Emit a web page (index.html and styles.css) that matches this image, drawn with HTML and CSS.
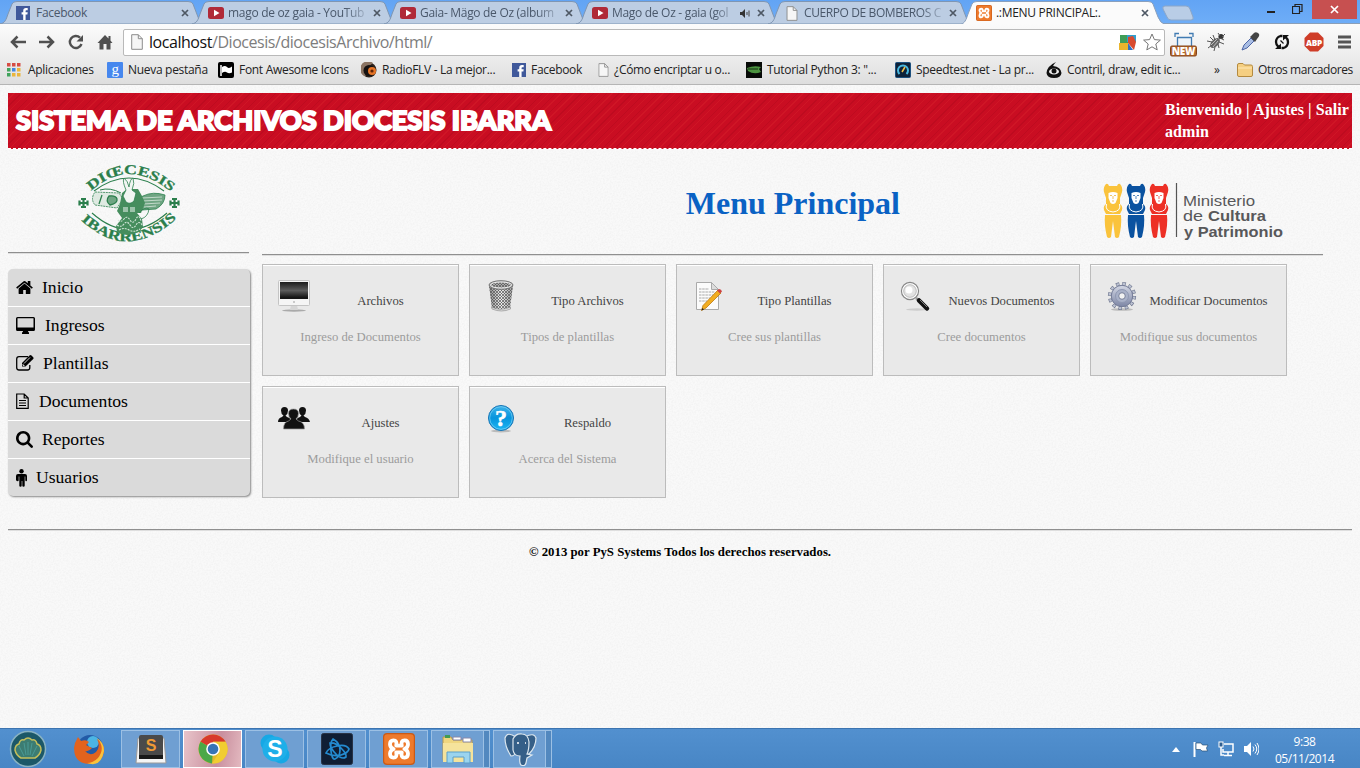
FILE: index.html
```html
<!DOCTYPE html>
<html lang="es">
<head>
<meta charset="utf-8">
<title>.:MENU PRINCIPAL:.</title>
<link rel="stylesheet" href="styles.css">
</head>
<body>
<svg class="defs" width="0" height="0">
  <defs>
    <linearGradient id="g-glass" x1="0" y1="0" x2="0" y2="1"><stop offset="0" stop-color="#1c1c1c"/><stop offset=".5" stop-color="#5c5c5c"/><stop offset=".9" stop-color="#161616"/></linearGradient>
    <linearGradient id="g-metal" x1="0" y1="0" x2="1" y2="0"><stop offset="0" stop-color="#888"/><stop offset=".5" stop-color="#eee"/><stop offset="1" stop-color="#999"/></linearGradient>
    <linearGradient id="g-blue" x1="0" y1="0" x2="0" y2="1"><stop offset="0" stop-color="#3fb4ea"/><stop offset=".5" stop-color="#0795dd"/><stop offset="1" stop-color="#1cb6f4"/></linearGradient>
    <linearGradient id="g-gear" x1="0" y1="0" x2="0" y2="1"><stop offset="0" stop-color="#d3d7e4"/><stop offset="1" stop-color="#7d86a5"/></linearGradient>
    <pattern id="mesh" width="3" height="3" patternUnits="userSpaceOnUse"><path d="M0 0l3 3M3 0L0 3" stroke="#555" stroke-width=".7"/></pattern>
    <symbol id="fb" viewBox="0 0 14 14"><path fill="#40599b" d="M0 0h14v14H0z"/><path fill="#fff" d="M7.200 14V8.500H5.600V6.300h1.600V5c0-2 1-2.900 2.700-2.900h1.800v2.200h-1.100c-.8 0-1 .3-1 1v1h2.100l-.3 2.200H9.600V14z"/></symbol>
    <symbol id="yt" viewBox="0 0 16 12"><rect width="16" height="12" rx="2.500" fill="#b02a38"/><path fill="#fff" d="M6 2.800v6.400l5.500-3.200z"/></symbol>
    <symbol id="page" viewBox="0 0 12 16"><path d="M.7.7h6.600l4 4v10.600H.7z" fill="#f6f6f6" stroke="#8d8d8d"/><path d="M7.300.7v4h4" fill="none" stroke="#8d8d8d"/></symbol>
    <symbol id="xampp" viewBox="0 0 16 16"><rect width="16" height="16" rx="2" fill="#c95a17"/><rect x=".6" y=".6" width="14.800" height="14.800" rx="1.600" fill="#ee7a2c"/><path d="M6.600 6.300Q7.200 3.700 5.200 3.700 3.500 3.700 3.500 5.600 3.500 7.300 5.300 8 3.500 8.700 3.500 10.400 3.500 12.300 5.200 12.300 7.200 12.300 6.600 9.700H9.400Q8.800 12.300 10.800 12.300 12.500 12.300 12.500 10.400 12.500 8.700 10.700 8 12.500 7.300 12.500 5.600 12.500 3.700 10.800 3.700 8.800 3.700 9.400 6.300z" fill="none" stroke="#fff" stroke-width="1.900" stroke-linejoin="round"/></symbol>
    <symbol id="close" viewBox="0 0 8 8"><path d="M1 1l6 6M7 1L1 7" stroke="#4e5864" stroke-width="1.700"/></symbol>
    <symbol id="tab" viewBox="0 0 210 24"><path d="M0 24C5 23 6 20 8 14L12 4Q13 1.500 17 1.500H188q4 0 5 2.500l5 13q2 6 8 7z" fill="#bccde3" stroke="#7f96b3"/></symbol>
  </defs>
</svg>

<header class="browser">
  <div class="tabs">
    <div class="tab"><svg class="shape"><use href="#tab"/></svg><svg class="fav" width="14" height="14"><use href="#fb"/></svg><span class="label">Facebook</span><svg class="x" width="8" height="8"><use href="#close"/></svg></div>
    <div class="tab"><svg class="shape"><use href="#tab"/></svg><svg class="fav" width="16" height="12"><use href="#yt"/></svg><span class="label">mago de oz gaia - YouTub</span><svg class="x" width="8" height="8"><use href="#close"/></svg></div>
    <div class="tab"><svg class="shape"><use href="#tab"/></svg><svg class="fav" width="16" height="12"><use href="#yt"/></svg><span class="label">Gaia- Mägo de Oz (album</span><svg class="x" width="8" height="8"><use href="#close"/></svg></div>
    <div class="tab"><svg class="shape"><use href="#tab"/></svg><svg class="fav" width="16" height="12"><use href="#yt"/></svg><span class="label">Mago de Oz - gaia (gol</span><svg class="snd" width="11" height="9" viewBox="0 0 11 9"><path d="M0 3h2l3-3v9L2 6H0z" fill="#333"/><path d="M7 3v3M9 1.500v6" stroke="#444"/></svg><svg class="x" width="8" height="8"><use href="#close"/></svg></div>
    <div class="tab"><svg class="shape"><use href="#tab"/></svg><svg class="fav" width="12" height="15"><use href="#page"/></svg><span class="label">CUERPO DE BOMBEROS C</span><svg class="x" width="8" height="8"><use href="#close"/></svg></div>
    <div class="tab active"><svg class="shape" viewBox="0 0 210 24"><path d="M0 25C5 23 6 20 8 14L12 4Q13 1.500 17 1.500H188q4 0 5 2.500l5 13q2 6 8 8z" fill="#fbfbfb" stroke="#8aa0bd"/></svg><svg class="fav" width="16" height="16"><use href="#xampp"/></svg><span class="label">.:MENU PRINCIPAL:.</span><svg class="x" width="8" height="8"><use href="#close"/></svg></div>
    <svg class="newtab" width="32" height="16" viewBox="0 0 32 16"><path d="M3 1h21q3 0 4 3l3 8q1 3-2 3H9q-3 0-4-3L1 4Q0 1 3 1z" fill="#b9cde6" stroke="#8ba6c8"/></svg>
    <div class="winctl">
      <svg width="8" height="18" viewBox="0 0 8 18"><path d="M0 12h8" stroke="#222" stroke-width="2"/></svg>
      <svg width="11" height="18" viewBox="0 0 11 18"><path d="M3 7V4.500h7v7H8M.5 6.500h7v7h-7z" fill="none" stroke="#222" stroke-width="1.200"/></svg>
      <span class="winclose"><svg width="9" height="9" viewBox="0 0 9 9"><path d="M1 1l7 7M8 1L1 8" stroke="#fff" stroke-width="1.700"/></svg></span>
    </div>
  </div>
  <div class="toolbar">
    <div class="nav">
      <svg width="16" height="16" viewBox="0 0 16 16"><path d="M16 8H2.500M7.500 2.500L2 8l5.500 5.500" fill="none" stroke="#505050" stroke-width="2.500"/></svg>
      <svg width="16" height="16" viewBox="0 0 16 16"><path d="M0 8h13.500M8.500 2.500L14 8l-5.500 5.500" fill="none" stroke="#505050" stroke-width="2.500"/></svg>
      <svg width="16" height="16" viewBox="0 0 16 16"><path d="M13.500 10A6 6 0 1 1 12 3.600" fill="none" stroke="#505050" stroke-width="2.400"/><path d="M15 1v6.500H8.500z" fill="#505050"/></svg>
      <svg width="16" height="16" viewBox="0 0 16 16"><path d="M8 1L.5 9h2v6.500h4V10h3v5.500h4V9h2l-2-2.500V2h-2v2.500z" fill="#505050"/></svg>
    </div>
    <div class="address">
      <svg width="12" height="16"><use href="#page"/></svg>
      <span class="url"><b>localhost</b>/Diocesis/diocesisArchivo/html/</span>
      <svg class="sq" width="18" height="17" viewBox="0 0 18 17"><path d="M1 1h8v8H1z" fill="#3f9e58"/><path d="M8 1h9v7H8z" fill="#2f9fd0"/><path d="M9 3l5-1 3 6-2 8-6-7z" fill="#d94a2e"/><path d="M0 9h9v7H0z" fill="#eab52c"/><path d="M9 9l5 7H9z" fill="#2f71c1"/></svg>
      <svg width="18" height="18" viewBox="0 0 18 18"><path d="M9 1l2.400 5.600 6 .5-4.600 3.900 1.400 5.900L9 13.800 3.800 16.900 5.200 11 .6 7.100l6-.5z" fill="#fff" stroke="#777"/></svg>
    </div>
    <div class="exts">
      <svg class="ext-new" width="28" height="26" viewBox="0 0 28 26"><path d="M5 5V1.500h4M19 1.500h4V5" fill="none" stroke="#417bb2" stroke-width="1.300"/><path d="M7.500 15V5.500h14V15" fill="#eef4fa" stroke="#417bb2" stroke-width="1.300"/><rect x=".5" y="14" width="26" height="10" rx="1.500" fill="#b4672e" stroke="#84451a"/><text x="13.500" y="22.700" text-anchor="middle" font-family="Open Sans" font-weight="800" font-size="10" fill="#fff">NEW</text></svg>
      <svg width="20" height="20" viewBox="0 0 20 20"><ellipse cx="9" cy="11" rx="3.500" ry="6" transform="rotate(45 9 11)" fill="#666"/><circle cx="15" cy="4.500" r="2.600" fill="#333"/><path d="M1 9l5 1M2 16l4-3M8 19l1-4M13 16l-1-4M18 12l-5-2M7 3l2 5M4 5l3 3M18 8l-4-2M12 1l2 3M19 2l-3 3" stroke="#555"/><path d="M5 13l6-6M7 15l5-6" stroke="#bbb"/></svg>
      <svg width="20" height="20" viewBox="0 0 20 20"><path d="M2 18l2-5 7-7 3 3-7 7z" fill="#a9bde3" stroke="#4d65a6"/><path d="M10 5l5 5 2-3q4-4 1-6t-5 1z" fill="#444"/></svg>
      <svg width="16" height="16" viewBox="0 0 16 16"><path d="M8.500 2H6.500Q2 3.500 2 8q0 3 2.500 5M7.500 14h2Q14 12.500 14 8q0-3-2.500-5" fill="none" stroke="#111" stroke-width="2.300"/><path d="M1 15l6 0V9.500zM15 1H9v5.500z" fill="#111"/><path d="M6.500 6.500l3 3" stroke="#111" stroke-width="1.300"/></svg>
      <svg width="20" height="20" viewBox="0 0 20 20"><path d="M6 .5h8L19.500 6v8L14 19.500H6L.5 14V6z" fill="#cf3d28"/><text x="10" y="13.500" text-anchor="middle" font-family="Open Sans" font-weight="800" font-size="9.500" textLength="16" lengthAdjust="spacingAndGlyphs" fill="#fff">ABP</text></svg>
      <svg width="13" height="14" viewBox="0 0 13 14"><path d="M0 2h13M0 7h13M0 12h13" stroke="#555" stroke-width="3"/></svg>
    </div>
  </div>
  <nav class="bookmarks">
    <div class="bm"><svg width="14" height="14" viewBox="0 0 14 14"><path d="M0 0h3.500v3.500H0zM5 0h3.500v3.500H5zM10 0h3.500v3.500H10z" fill="#d64b43"/><path d="M0 5h3.500v3.500H0zM0 10h3.500v3.500H0z" fill="#41a35c"/><path d="M5 5h3.500v3.500H5z" fill="#4286e0"/><path d="M10 5h3.500v3.500H10zM5 10h3.500v3.500H5zM10 10h3.500v3.500H10z" fill="#e9b53c"/></svg><span>Aplicaciones</span></div>
    <div class="bm"><svg width="16" height="16" viewBox="0 0 16 16"><rect width="16" height="16" rx="1" fill="#4687ee"/><text x="8" y="11.500" text-anchor="middle" font-family="Liberation Serif" font-size="15" fill="#fff">g</text></svg><span>Nueva pestaña</span></div>
    <div class="bm"><svg width="16" height="16" viewBox="0 0 16 16"><rect width="16" height="16" rx="2" fill="#000"/><path d="M3 3v11" stroke="#fff" stroke-width="1.500"/><path d="M4 5q3-2 5 0t5-.5v6q-3 1.500-5 0t-5 .5z" fill="#fff"/></svg><span>Font Awesome Icons</span></div>
    <div class="bm"><svg width="16" height="16" viewBox="0 0 16 16"><circle cx="8" cy="8" r="7.500" fill="#2b211b"/><path d="M12 1A8 8 0 1 0 5 15Q2 8 12 1z" fill="#8b7463"/><circle cx="8" cy="8.500" r="5.500" fill="#151111"/><circle cx="11" cy="9" r="4" fill="#e67527"/><circle cx="11" cy="9" r="1.600" fill="#612306"/></svg><span>RadioFLV - La mejor...</span></div>
    <div class="bm"><svg width="14" height="14"><use href="#fb"/></svg><span>Facebook</span></div>
    <div class="bm"><svg width="11" height="14" viewBox="0 0 12 16"><use href="#page"/></svg><span>¿Cómo encriptar u o...</span></div>
    <div class="bm"><svg width="16" height="16" viewBox="0 0 16 16"><path d="M0 0h16v16H0z" fill="#080b08"/><path d="M1 6q7-3 14-1l-2 2 2 3q-7 3-13-1z" fill="#4c9440"/><path d="M2 7h10" stroke="#132c10"/></svg><span>Tutorial Python 3: "...</span></div>
    <div class="bm"><svg width="16" height="16" viewBox="0 0 16 16"><rect x=".5" y=".5" width="15" height="15" rx="1" fill="#0e2239" stroke="#1c507e"/><path d="M4.500 12a5 5 0 1 1 7 0" fill="none" stroke="#48b8df" stroke-width="2"/><path d="M7 10l3-5" stroke="#f2c34c" stroke-width="1.500"/></svg><span>Speedtest.net - La pr...</span></div>
    <div class="bm"><svg width="16" height="16" viewBox="0 0 16 16"><path d="M10 0Q1 4 .5 11 1 16 8 16t7.500-5Q15 5 7 4 8 2 10 0z" fill="#111"/><ellipse cx="8" cy="9.500" rx="5" ry="3" fill="#eee"/><circle cx="8" cy="9" r="2.500" fill="#111"/></svg><span>Contril, draw, edit ic...</span></div>
    <div class="bm more">»</div>
    <div class="bm"><svg width="16" height="14" viewBox="0 0 16 14"><path d="M.5 2q0-1.500 1.500-1.500h4L7.500 2H14q1.500 0 1.500 1.500V12q0 1.500-1.500 1.500H2Q.5 13.500.5 12z" fill="#f5cf82" stroke="#b48a3f"/><path d="M1 5h14" stroke="#ffe7b4"/></svg><span>Otros marcadores</span></div>
  </nav>
</header>

<main class="page">
  <div class="banner">
    <svg class="brand" width="540" height="36" viewBox="0 0 540 36"><text x="1" y="28" textLength="535" lengthAdjust="spacingAndGlyphs">SISTEMA DE ARCHIVOS DIOCESIS IBARRA</text></svg>
    <div class="session">Bienvenido | Ajustes | Salir<br>admin</div>
  </div>

  <div class="columns">
    <aside class="side">
      <div class="seal">
        <svg width="104" height="80" viewBox="0 0 104 80">
          <defs><path id="arc-t" d="M13 27Q51 -7 93 28"/><path id="arc-b" d="M3 56Q50 100 100 53"/></defs>
          <g fill="#2b7f4c" stroke="#2b7f4c" stroke-width=".3" font-family="Liberation Serif" font-weight="bold" font-size="13.500">
            <text textLength="89" lengthAdjust="spacingAndGlyphs"><textPath href="#arc-t">DIŒCESIS</textPath></text>
            <text textLength="108" lengthAdjust="spacingAndGlyphs"><textPath href="#arc-b">IBARRENSIS</textPath></text>
          </g>
          <path d="M16 27Q51 1 86 27M14 49Q51 82 89 49" fill="none" stroke="#2b7f4c" stroke-width="1.100"/>
          <g fill="none" stroke="#2b7f4c" stroke-width="2.200"><path id="cr" d="M5.500 34v10M.5 39h10M3 35h5M3 43h5M1.500 36.500v5M9.500 36.500v5"/><use href="#cr" x="91"/></g>
          <path d="M17 28l24 1 4 6-6 9-22-3q-5-6 0-13z" fill="#dfeae2" stroke="#2b7f4c" stroke-width=".8" stroke-dasharray="2 .7"/>
          <path d="M87 31q-12-4-22 1l-6 3 5 11 14-1q9-5 9-14z" fill="#6fa583" stroke="#2b7f4c" stroke-width=".8"/>
          <path d="M24 31l-3 9M31 32q7-1 8 3t-7 6q-5-4-1-9z" fill="#6fa583" stroke="#2b7f4c" stroke-width="1.300"/>
          <path d="M64 34l20-1M64 37l20-1M65 40l17-1M66 43l12-1" fill="none" stroke="#e5efe8" stroke-width=".7"/>
          <path d="M22 26q10-3 21 3" fill="none" stroke="#2b7f4c"/>
          <path d="M44 29l5-4h11l4 7 3 7-4 10h-4l5 6 1 8-4 5q-13 6-22 0l-1-6 6-8-5-7 3-7z" fill="#458d5d"/>
          <path d="M48 26q-4-9-2-12 4 3 5 9 1-8 4-9 2 5-1 12l4 3-2 8q-4 4-8 1l-3-6z" fill="#f1f5f2" stroke="#2b7f4c" stroke-width=".8"/>
          <path d="M45 43h5v5h-5zM52 43h5v5h-5z" fill="#9cc3aa"/>
          <path d="M40 56q3 3 6-1t6 1 6-1 5 2M39 61q4 3 7-1t6 1 6 0 6 0M41 66q5-3 10 0t11-1" fill="none" stroke="#d5e7db" stroke-width="1.100" stroke-dasharray="2 1"/>
          <path d="M61 49q6-7 10-4-1 8-8 10" fill="none" stroke="#2b7f4c" stroke-width=".8"/>
        </svg>
      </div>
      <hr>
      <ul class="menu">
        <li><svg width="17" height="17" viewBox="64 64 1664 1664"><path d="M1472 992v480q0 26-19 45t-45 19h-384v-384H768v384H384q-26 0-45-19t-19-45V992q0-1 .5-3t.5-3l575-474 575 474q1 2 1 6zm223-69l-62 74q-8 9-21 11h-3q-13 0-21-7L896 424l-692 577q-12 8-24 7-13-2-21-11l-62-74q-8-10-7-23.500t11-21.500l719-599q32-26 76-26t76 26l244 204V288q0-14 9-23t23-9h192q14 0 23 9t9 23v408l219 182q10 8 11 21.500t-7 23.500z"/></svg>Inicio</li>
        <li><svg width="20" height="17" viewBox="0 0 20 17"><path fill-rule="evenodd" d="M1.500 0h16Q19 0 19 1.500v11q0 1.500-1.500 1.500H12q0 1 1 1.500V17H6v-1.500q1-.5 1-1.500H1.500Q0 14 0 12.500v-11Q0 0 1.500 0zm0 1.200v9.300h16V1.200z"/></svg>Ingresos</li>
        <li><svg width="18" height="16" viewBox="0 0 18 16"><path d="M12 1.700H3Q.7 1.700.7 4v8.500Q.7 15 3 15h8.500q2.300 0 2.300-2.500V10" fill="none" stroke="#000" stroke-width="1.300"/><path d="M6 11.500V8l7.500-7.500q1-.9 2 0l1.700 1.700q.8.900 0 1.800L9.500 11.500z"/><path d="M8 8.500l6-6M7 9v1.500h1.500" stroke="#ddd" stroke-width=".9" fill="none"/></svg>Plantillas</li>
        <li><svg width="14" height="16" viewBox="0 0 14 16"><path d="M.7 1h7.500l4 4v10.300H.7zM8.200 1v4h4M3 7.500h7M3 10h7M3 12.500h7" fill="none" stroke="#000" stroke-width="1.200"/></svg>Documentos</li>
        <li><svg width="17" height="17" viewBox="64 128 1664 1664"><path d="M1216 832q0-185-131.500-316.500t-316.500-131.500-316.500 131.500-131.500 316.500 131.500 316.500 316.500 131.500 316.500-131.500 131.500-316.500zm512 832q0 52-38 90t-90 38q-54 0-90-38l-343-342q-179 124-399 124-143 0-273.500-55.500t-225-150-150-225-55.500-273.500 55.500-273.500 150-225 225-150 273.500-55.500 273.500 55.500 225 150 150 225 55.500 273.500q0 220-124 399l343 343q37 37 37 90z"/></svg>Reportes</li>
        <li><svg width="11" height="18" viewBox="0 0 11 18"><circle cx="5.500" cy="2.200" r="2.200"/><path d="M2 5h7q2 0 2 2v4.300q0 .9-.8.900t-.9-.9V7.500h-.6v9.300q0 1-1.200 1t-1.200-1V12h-.6v4.800q0 1-1.200 1t-1.200-1V7.500h-.6v3.800q0 .9-.9.900T0 11.300V7q0-2 2-2z"/></svg>Usuarios</li>
      </ul>
    </aside>

    <section class="content">
      <div class="top">
        <h1>Menu Principal</h1>
        <svg class="ministry" width="184" height="62" viewBox="0 0 184 62">
          <defs>
            <g id="fig"><path d="M3 1q2-1 3 2h8q1-3 3-2 3 3 2 8l-2 6v6q3 2 2 6l-2 4H3l-2-4q-1-4 2-6v-6L1 9Q0 4 3 1zM2 32h16q1 10-2 22-2 2-4 0L10 38 8 54q-2 2-4 0Q1 42 2 32z"/><path d="M5.500 10q4.500-2 9 0v5l-2 5q-2.500 2-5 0l-2-5z" fill="#fff"/><path d="M3.500 21q-2 7 6.500 8 8.500-1 6.500-8" fill="none" stroke="#fff" stroke-width="1"/><path d="M7 12.500h2M11 12.500h2M10 13v3M9 18h2" stroke-width=".7" stroke="currentColor"/></g>
          </defs>
          <use href="#fig" x="1" y="2" fill="#fac33c" color="#e9aa22"/><use href="#fig" x="24" y="2" fill="#0a52a0" color="#0a52a0"/><use href="#fig" x="47" y="2" fill="#ed3026" color="#ed3026"/>
          <path d="M74.500 2v54" stroke="#555" stroke-width="1.200"/>
          <g fill="#58585a" font-family="Liberation Sans" font-size="14.500">
            <text x="81" y="25" textLength="72" lengthAdjust="spacingAndGlyphs">Ministerio</text>
            <text x="81" y="40" textLength="20" lengthAdjust="spacingAndGlyphs">de</text><text x="106" y="40" font-weight="bold" textLength="58" lengthAdjust="spacingAndGlyphs">Cultura</text>
            <text x="82" y="55.500" font-weight="bold" textLength="99" lengthAdjust="spacingAndGlyphs">y Patrimonio</text>
          </g>
        </svg>
      </div>
      <hr>
      <div class="cards">
        <a class="card"><svg width="32" height="32" viewBox="0 0 32 32"><ellipse cx="16" cy="30.500" rx="12" ry="1.200" fill="#aaa"/><path d="M13 25h6l1 5h-8z" fill="#d5d5d5"/><rect x=".5" y=".5" width="31" height="25" rx="1" fill="#f5f5f5" stroke="#c4c4c4"/><path d="M2 2h28v17H2z" fill="url(#g-glass)"/><circle cx="16" cy="22" r="1" fill="#bbb"/></svg><h2>Archivos</h2><p>Ingreso de Documentos</p></a>
        <a class="card"><svg width="32" height="32" viewBox="0 0 32 32"><path d="M4 5l3 23q9 5 18 0l3-23z" fill="url(#g-metal)"/><path d="M4 5l3 23q9 5 18 0l3-23z" fill="url(#mesh)"/><ellipse cx="16" cy="5" rx="12" ry="4.300" fill="#aaa" stroke="#777"/><ellipse cx="16" cy="5" rx="10.500" ry="3" fill="url(#mesh)" stroke="#eee"/><path d="M6.500 27q9 4.500 19 0v2q-9 4-18.500 0z" fill="#ddd" stroke="#888" stroke-width=".6"/></svg><h2>Tipo Archivos</h2><p>Tipos de plantillas</p></a>
        <a class="card"><svg width="32" height="32" viewBox="0 0 32 32"><path d="M4.500 2.500h15l7 7v20h-22z" fill="#fbfbfb" stroke="#aaa"/><path d="M19.500 2.500v7h7z" fill="#ddd" stroke="#aaa"/><path d="M7 9h10M7 12h16M7 15h14M7 18h11M7 21h8" stroke="#a8a8a8" stroke-dasharray="2.500 .7"/><path d="M9.500 30.500l1.500-5L26 10l3 3-15 15z" fill="#f2ad20" stroke="#bd7812" stroke-width=".8"/><path d="M25 10.500l2-1.500q2.500 0 3 2.500L28 13.500z" fill="#c44"/><path d="M9.500 30.500l.8-2.500 1.700 1.500z" fill="#222"/></svg><h2>Tipo Plantillas</h2><p>Cree sus plantillas</p></a>
        <a class="card"><svg width="32" height="32" viewBox="0 0 32 32"><ellipse cx="18" cy="29.500" rx="11" ry="1.200" fill="#ccc"/><path d="M17 18l4 3.500" stroke="#999" stroke-width="2.500"/><path d="M20 20.500l8 8" stroke="#111" stroke-width="4.500" stroke-linecap="round"/><path d="M21 20l7 7" stroke="#999" stroke-width=".8"/><circle cx="11" cy="11" r="8.500" fill="#e2e2e2" stroke="#888" stroke-width="1.300"/><circle cx="11" cy="11" r="7.200" fill="none" stroke="#fff" stroke-width="1.200"/><circle cx="11" cy="11" r="6.300" fill="none" stroke="#aaa" stroke-width=".7"/><circle cx="10" cy="10" r="3.500" fill="#fff"/></svg><h2>Nuevos Documentos</h2><p>Cree documentos</p></a>
        <a class="card"><svg width="32" height="32" viewBox="0 0 32 32"><ellipse cx="16" cy="29.500" rx="11" ry="1.300" fill="#bbb"/><circle cx="16" cy="16" r="12.300" fill="none" stroke="#69718a" stroke-width="3.600" stroke-dasharray="3.400 3.040"/><circle cx="16" cy="16" r="12.300" fill="none" stroke="#bcc2d2" stroke-width="2.400" stroke-dasharray="2.400 4.040" stroke-dashoffset="-.5"/><circle cx="16" cy="16" r="10.700" fill="url(#g-gear)" stroke="#727a96"/><circle cx="16" cy="16" r="6.500" fill="#a9b1c8" stroke="#8f98b2"/><circle cx="16" cy="16" r="3.300" fill="#f2f2f2" stroke="#777f99"/></svg><h2>Modificar Documentos</h2><p>Modifique sus documentos</p></a>
        <a class="card"><svg width="32" height="32" viewBox="0 0 32 32"><g fill="#111"><path id="pp" d="M0 20q0-4 4-5l1.500-1.500Q3 12 3 8.500 3 5 6.500 5T10 8.500q0 3.500-2.500 5L9 15q4 1 5 5z"/><use href="#pp" x="18"/><path d="M5.500 27q0-7 5-8l2.500-2q-2.500-2-2.500-5.500Q10.500 7 15.500 7t5 4.500q0 3.500-2.500 5.500l2.500 2q6 1 6 8z" stroke="#999" stroke-width=".7"/></g></svg><h2>Ajustes</h2><p>Modifique el usuario</p></a>
        <a class="card"><svg width="32" height="32" viewBox="0 0 32 32"><ellipse cx="16" cy="29" rx="10" ry="1.500" fill="#bbb"/><circle cx="16" cy="16" r="12.500" fill="url(#g-blue)" stroke="#1674b5"/><circle cx="16" cy="16" r="11.300" fill="none" stroke="#7ed2f5" stroke-width=".7"/><text x="16" y="24" text-anchor="middle" font-family="Liberation Serif" font-size="24" font-weight="bold" fill="#fff" stroke="#fff" stroke-width=".5">?</text></svg><h2>Respaldo</h2><p>Acerca del Sistema</p></a>
      </div>
    </section>
  </div>

  <footer class="foot"><hr>© 2013 por PyS Systems Todos los derechos reservados.</footer>
</main>

<div class="taskbar">
  <div class="task plain"><svg width="38" height="38" viewBox="0 0 38 38"><circle cx="19" cy="19" r="17.500" fill="#1c5868" stroke="#89b2c2" stroke-width="1.500"/><path d="M12 28q-5-3-6-8 0-5 4-6 1-5 5-4 4-4 8 0 4-1 5 4 4 1 4 6-1 5-6 8z" fill="#3c7c72" stroke="#c4be5b" stroke-width="1.500"/><path d="M15 26L10 16M17 25L15 13M19 25V12M21 25l2-12M23 26l5-10" stroke="#4a9a95"/></svg></div>
  <div class="task plain"><svg width="32" height="32" viewBox="0 0 32 32"><circle cx="17" cy="15" r="13" fill="#235ba7"/><circle cx="20" cy="9" r="6" fill="#4cb5e4"/><path d="M2 10l3-6 3 4q5-2 8 1l-3 3 6 3q-3 4-7 3 5 6 11 1 5-5 1-13 8 5 7 13-2 11-14 12Q4 31 1.500 20 .5 14 2 10z" fill="#e2631e"/><path d="M24 5q9 10 1 20-5 5-11 5 14 5 17-12 0-9-7-13z" fill="#f8c23c"/></svg></div>
  <div class="task"><svg width="32" height="32" viewBox="0 0 32 32"><path d="M3 5h26l2 25H1z" fill="#f4f4f4" stroke="#999"/><rect x="4" y="2" width="24" height="24" rx="2" fill="#4a4a4a"/><path d="M4 22h24v4H4z" fill="#191919"/><text x="16" y="18" text-anchor="middle" font-family="Liberation Sans" font-weight="bold" font-size="16" fill="#ef9a35">S</text></svg></div>
  <div class="task current"><svg width="32" height="32" viewBox="0 0 32 32"><circle cx="16" cy="16" r="14.500" fill="#e2b92c"/><path d="M16 16L3.500 8.700A14.500 14.500 0 0 1 28.600 8.700H16z" fill="#d83a2c"/><path d="M16 16l-1 14.400A14.500 14.500 0 0 1 3.500 8.700z" fill="#4ba847"/><path d="M16 8.700h12.600A14.500 14.500 0 0 1 15 30.500L22.500 19z" fill="#f1cd31"/><circle cx="16" cy="16" r="6.800" fill="#fff"/><circle cx="16" cy="16" r="5.300" fill="#3774b6"/></svg></div>
  <div class="task"><svg width="32" height="32" viewBox="0 0 32 32"><circle cx="10" cy="10" r="8.500" fill="#16a8e5"/><circle cx="22" cy="22" r="8.500" fill="#16a8e5"/><circle cx="16" cy="16" r="12.500" fill="#1eafe9"/><text x="16" y="24" text-anchor="middle" font-family="Liberation Sans" font-weight="bold" font-size="23" fill="#fff">S</text></svg></div>
  <div class="task"><svg width="32" height="32" viewBox="0 0 32 32"><rect x=".5" y=".5" width="31" height="31" rx="2" fill="#101e34" stroke="#293346"/><g fill="none" stroke="#248bd0" stroke-width="1.700"><path d="M12 6q-3 3-2 12t4 8q5-2 5-9T12 6zM5 20q2-5 11-7t12 3q-1 4-8 6T5 20zM9 10q5-1 11 5t5 9q-4 3-10-3T9 10z"/></g></svg></div>
  <div class="task"><svg width="32" height="32"><use href="#xampp"/></svg></div>
  <div class="task stacked"><svg width="32" height="32" viewBox="0 0 32 32"><path d="M1 4h8l2 3h19v20H1z" fill="#efd67f" stroke="#ba984d"/><path d="M3 2h5v3H3z" fill="#429b53"/><path d="M11 4h8v3h-8zM21 5h8v4h-8z" fill="#fff" stroke="#88a"/><path d="M1 10h30v19H1z" fill="#f5e39c"/><path d="M5 30V19h23v11h-6v-6H11v6z" fill="#9bd4ee" stroke="#5b9fca"/></svg></div>
  <div class="task stacked"><svg width="34" height="34" viewBox="0 0 34 34"><g fill="#355f88" stroke="#dce7ef" stroke-width="1.200"><path d="M13 5Q4-1 2 6q0 9 6 18 4 0 5-5zM22 5q9-5 11 1 0 9-7 16-4 0-5-5z"/><path d="M10 7q3-6 9-5 6 0 7 8 0 8-2 12l5 1-5 3-1 5q-1 4-5 2-2-2-1-9-6 0-7-6z"/></g><path d="M14 11h2M22 11h1" stroke="#fff" stroke-width="1.500"/></svg></div>
  <div class="tray">
    <svg width="8" height="5" viewBox="0 0 8 5"><path d="M4 0l4 5H0z" fill="#fff"/></svg>
    <svg width="16" height="16" viewBox="0 0 16 16"><path d="M1.500 1v15" stroke="#fff" stroke-width="2"/><path d="M3 2h5l1.500 2H15l-1.500 3 1 3H9L7.500 8.500H3z" fill="#fff" stroke="#285077" stroke-width=".7"/></svg>
    <svg width="16" height="16" viewBox="0 0 16 16"><path d="M6 3h9v8H5V8M10 11v3M6 14.500h8M3 5v9h3" fill="none" stroke="#fff" stroke-width="1.500"/><rect x="1" y="1" width="4" height="5" fill="#2d5e91" stroke="#fff"/></svg>
    <svg width="16" height="16" viewBox="0 0 16 16"><path d="M1 5h3l4-4v14l-4-4H1z" fill="#fff"/><path d="M10 5.500q2 2.500 0 5M12 3.500q3.500 4.500 0 9M14 2q4 6 0 12" fill="none" stroke="#fff"/></svg>
  </div>
  <div class="clock">9:38<br>05/11/2014</div>
</div>
</body>
</html>
```
FILE: styles.css
```css
* { box-sizing: border-box; }
html, body { margin: 0; height: 100%; overflow: hidden; }
body { display: flex; flex-direction: column; width: 1360px; height: 768px; font-family: "Liberation Serif", "Times New Roman", serif; color: #000; }
.defs { position: absolute; }
svg { flex: none; display: block; }

/* browser chrome */
.browser { flex: none; height: 85px; font: 12px/16px "Open Sans", sans-serif; letter-spacing: -.3px; background: linear-gradient(#fbfbfb 24px, #ededed 56px, #dedede); border-bottom: 1px solid #b5b5b5; }
.tabs { display: flex; height: 24px; background: linear-gradient(#62a4f4, #6eadf7); border-bottom: 1px solid #8a9fb8; }
.tab { position: relative; width: 192px; height: 24px; display: flex; align-items: center; padding: 2px 3px 0 16px; color: #4a586b; }
.tab .shape { position: absolute; left: 0; top: 0; width: 210px; height: 24px; z-index: 0; }
.tab .fav, .tab .label, .tab .x, .tab .snd { position: relative; z-index: 1; }
.tab .fav { margin-right: 4px; }
.tab .label { flex: 1; min-width: 0; margin-right: 8px; white-space: nowrap; -webkit-mask-image: linear-gradient(90deg, #000 85%, rgba(0, 0, 0, .25)); }
.tab .snd { margin-right: 6px; }
.tab:first-child .fav { margin-right: 6px; }
.tab:nth-child(5) .fav { margin: 0 6px 0 2px; }
.tab:nth-child(5) .label { letter-spacing: -.4px; }
.tab.active { color: #222; z-index: 2; }
.tab.active .label, .tab:first-child .label { -webkit-mask-image: none; }
.tab .x { margin-right: 0; }
.newtab { margin: 5px 0 0 10px; }
.winctl { margin-left: auto; margin-right: 3px; display: flex; gap: 17px; align-items: flex-start; }
.winclose { margin-left: -8px; width: 45px; height: 19px; background: #c75050; display: flex; align-items: center; justify-content: center; }

.toolbar { display: flex; align-items: center; height: 36px; }
.nav { display: flex; gap: 13px; padding-left: 10px; width: 123px; }
.address { width: 1042px; height: 27px; background: #fff; border: 1px solid #b9b9b9; border-radius: 2px; display: flex; align-items: center; padding: 0 3px 0 7px; gap: 6px; }
.url { flex: 1; font-size: 16px; line-height: 24px; letter-spacing: -.45px; color: #7d7d7d; }
.url b { font-weight: 400; color: #111; }
.exts { flex: 1; display: flex; align-items: center; justify-content: space-between; padding: 0 9px 0 5px; }
.ext-new { margin: 6px -6px 0 0; }

.bookmarks { display: grid; height: 22px; padding-left: 7px; grid-template-columns: 100px 111px 143px 151px 86px 148px 149px 151px 168px 23px 1fr; align-items: center; color: #222; margin-top: -1px; }
.bm { display: flex; align-items: center; gap: 5px; white-space: nowrap; }
.bm:first-child { gap: 7px; }
.bm:last-child { letter-spacing: -.42px; }

/* page */
.page { flex: 1; min-height: 0; padding: 8px 8px 0; background-color: #f9f9f9; background-image: url("data:image/svg+xml,%3Csvg xmlns='http://www.w3.org/2000/svg' width='160' height='160'%3E%3Cfilter id='n'%3E%3CfeTurbulence type='fractalNoise' baseFrequency='.6' numOctaves='2' stitchTiles='stitch'/%3E%3CfeColorMatrix values='0 0 0 0 .5 0 0 0 0 .5 0 0 0 0 .5 .2 0 0 0 -.07'/%3E%3C/filter%3E%3Crect width='160' height='160' filter='url(%23n)'/%3E%3C/svg%3E"); }
hr { margin: 0; border: 0; height: 2px; border-top: 1px solid #8f8f8f; border-bottom: 1px solid #dedede; }
.banner { height: 56px; display: flex; justify-content: space-between; padding: 9px 2px 0 7px; background: repeating-linear-gradient(135deg, rgba(120, 0, 15, .14) 0 1px, transparent 1px 4px, rgba(255, 90, 70, .11) 4px 5px, transparent 5px 9px), #c90d22; background-clip: border-box; border-bottom: 1px dashed #fff; }
.brand text { font-family: Lato, sans-serif; font-weight: 900; font-size: 27px; fill: #fff; stroke: #fff; stroke-width: 2px; }
.session { width: 185px; margin-top: -3px; font-weight: bold; font-size: 16px; line-height: 22px; letter-spacing: .06px; color: #fff; white-space: nowrap; }

.columns { display: flex; gap: 12px; height: 380px; }
.side { width: 242px; }
.side hr { width: 241px; }
.seal { height: 103px; padding: 15px 0 0 70px; }
.menu { list-style: none; margin: 15px 0 0; padding: 0; border-radius: 5px; overflow: hidden; background: #dadada; box-shadow: 1px 1px 2px #888; }
.menu li { height: 38px; padding: 0 8px 1px; display: flex; align-items: center; gap: 9px; font-size: 17.600px; border-bottom: 1px solid #fff; }
.menu li:last-child { height: 37px; border-bottom: 0; padding-bottom: 0; }

.content { width: 1061px; }
.top { height: 105px; display: flex; justify-content: flex-end; }
.top h1 { margin: 36px 202px 0 0; font-size: 32px; line-height: 36px; color: #0a62c4; }
.ministry { margin: 32px 37px 0 0; }
.cards { display: flex; flex-wrap: wrap; gap: 10px; margin-top: 8px; }
.card { width: 197px; height: 112px; border: 1px solid #bcbcbc; background: #e9e9e9; box-shadow: inset 0 1px #fff; display: grid; grid-template: 64px 1fr / 40px 1fr; font-size: 12.700px; line-height: 16px; text-align: center; }
.card svg { margin: 15px 0 0 15px; }
.card h2 { margin: 28px 0 0; font: inherit; color: #444; white-space: nowrap; }
.card p { grid-column: 1 / 3; margin: 0; color: #9c9c9c; }
.foot { text-align: center; font-size: 12.800px; font-weight: bold; line-height: 16px; }
.foot hr { margin-bottom: 13px; }

/* taskbar */
.taskbar { flex: none; display: flex; height: 40px; padding-top: 1px; gap: 3px; background: linear-gradient(#5290cf, #4886c5); border-top: 1px solid #3c74b0; color: #fff; }
.task { width: 59px; height: 38px; border: 1px solid #9cc0e4; background: #6f9fd2; display: flex; align-items: center; justify-content: center; }
.task.plain { border-color: transparent; background: none; width: 55px; }
.task.plain:nth-child(2) { width: 60px; padding-left: 2px; }
.task.current { background: linear-gradient(100deg, #e8c4ca, #c98f9e 60%, #e3b9c0); border-color: #fff; }
.task.stacked { box-shadow: inset -5px 0 #5288bf, inset -6px 0 #9cc0e4; padding-right: 6px; }
.tray { margin-left: auto; display: flex; align-items: center; gap: 9px; }
.tray svg:first-child { margin-right: 4px; }
.clock { width: 102px; padding: 3px 9px 0 0; margin-left: -4px; text-align: center; font: 12px/17px "Open Sans", sans-serif; letter-spacing: -.45px; }
```
